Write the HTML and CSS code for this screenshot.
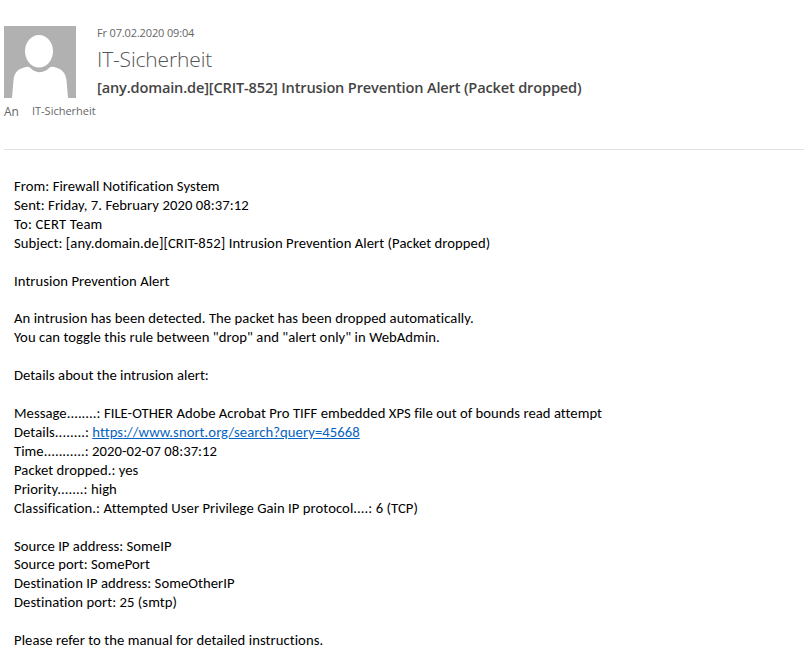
FILE: index.html
```html
<!DOCTYPE html>
<html lang="de">
<head>
<meta charset="utf-8">
<title>Intrusion Prevention Alert</title>
<link rel="stylesheet" href="styles.css">
</head>
<body>
<header class="header">
  <svg class="avatar" viewBox="0 0 72 72"><rect width="72" height="72" fill="#b1b1b1"/><ellipse cx="35" cy="25.3" rx="14" ry="16.2" fill="#fff"/><path d="M8 72L9.500 54C10.300 46 14.500 42.500 23 40.800C25 40.500 26 41.500 27.500 43C32 47.200 39 47.200 44 43C46 41.300 46.800 40.400 49 40.800C57 42.500 61.500 46 62.500 54L64 72Z" fill="#fff"/></svg>
  <div class="meta">
    <div class="date">Fr 07.02.2020 09:04</div>
    <div class="sender">IT-Sicherheit</div>
    <div class="subject">[any.domain.de][CRIT-852] Intrusion Prevention Alert (Packet dropped)</div>
  </div>
</header>
<div class="to"><span class="to-label">An</span><span class="to-name">IT-Sicherheit</span></div>
<main class="body">
<div>From: Firewall Notification System</div>
<div>Sent: Friday, 7. February 2020 08:37:12</div>
<div class="wide">To: CERT Team</div>
<div>Subject: [any.domain.de][CRIT-852] Intrusion Prevention Alert (Packet dropped)</div>
<br>
<div>Intrusion Prevention Alert</div>
<br>
<div>An intrusion has been detected. The packet has been dropped automatically.</div>
<div>You can toggle this rule between "drop" and "alert only" in WebAdmin.</div>
<br>
<div class="tight">Details about the intrusion alert:</div>
<br>
<div class="tight">Message........: FILE-OTHER Adobe Acrobat Pro TIFF embedded XPS file out of bounds read attempt</div>
<div>Details........: <a href="#">https://www.snort.org/search?query=45668</a></div>
<div class="tight">Time...........: 2020-02-07 08:37:12</div>
<div>Packet dropped.: yes</div>
<div>Priority.......: high</div>
<div>Classification.: Attempted User Privilege Gain IP protocol....: 6 (TCP)</div>
<br>
<div class="tight">Source IP address: SomeIP</div>
<div class="tight">Source port: SomePort</div>
<div class="tight">Destination IP address: SomeOtherIP</div>
<div>Destination port: 25 (smtp)</div>
<br>
<div>Please refer to the manual for detailed instructions.</div>
</main>
</body>
</html>
```
FILE: styles.css
```css
body { margin: 0; background: #fff; color: #000; overflow: hidden; }
.header { display: flex; gap: 21px; padding: 26px 0 0 4px; height: 72px; font-family: "Open Sans", sans-serif; color: #666; }
.avatar { width: 72px; height: 72px; }
.meta { white-space: nowrap; }
.date { font-size: 11px; line-height: 14px; letter-spacing: -0.15px; }
.sender { font-size: 21px; font-weight: 300; line-height: 38px; letter-spacing: -0.15px; color: #555; }
.subject { font-size: 14.6px; font-weight: 600; line-height: 18px; letter-spacing: -0.17px; color: #444; }
.to { display: flex; gap: 13px; margin-left: 4px; height: 52px; padding-top: 4px; box-sizing: border-box; font: 11px/18px "Open Sans", sans-serif; color: #666; border-bottom: 1px solid #e1e1e1; }
.to-label { font-size: 12px; line-height: 20px; }
.body { padding: 27px 14px 0; font-family: Carlito, Calibri, sans-serif; font-size: 14.667px; line-height: 18.92px; letter-spacing: 0.06px; white-space: nowrap; }
.wide { letter-spacing: 0.2px; }
.tight { letter-spacing: 0.04px; }
a { color: #0563c1; }
```
